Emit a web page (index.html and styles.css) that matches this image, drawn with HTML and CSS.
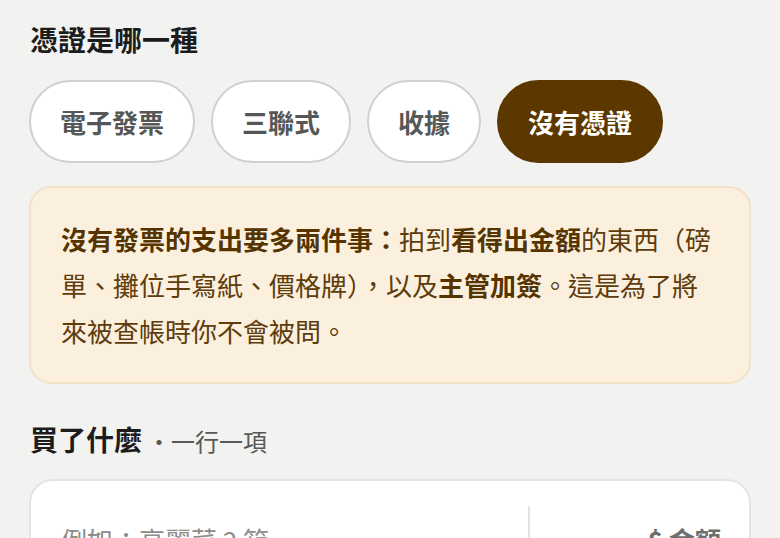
FILE: index.html
```html
<!DOCTYPE html>
<html lang="zh-Hant">
<head>
<meta charset="utf-8">
<link rel="stylesheet" href="styles.css">
</head>
<body>
<main class="page">
  <section class="section">
    <h2 class="label">憑證是哪一種</h2>
    <div class="pills">
      <button class="pill">電子發票</button>
      <button class="pill">三聯式</button>
      <button class="pill">收據</button>
      <button class="pill pill-active">沒有憑證</button>
    </div>
    <div class="notice">
      <b>沒有發票的支出要多兩件事：</b>拍到<b>看得出金額</b>的東西（磅單、攤位手寫紙、價格牌），以及<b>主管加簽</b>。這是為了將來被查帳時你不會被問。
    </div>
  </section>
  <section class="section items">
    <h2 class="label">買了什麼<span class="hint"><span class="dot">·</span>一行一項</span></h2>
    <div class="card">
      <div class="row">
        <div class="cell-name">例如：高麗菜 2 箱</div>
        <div class="cell-amount">$ 金額</div>
      </div>
    </div>
  </section>
</main>
</body>
</html>
```

FILE: styles.css
```css
* { box-sizing: border-box; }
html, body {
  margin: 0;
  padding: 0;
  background: #f2f2f0;
}
body {
  font-family: "Noto Sans CJK TC", "Noto Sans", sans-serif;
  color: #1c1c1c;
  overflow: hidden;
  height: 538px;
}
.page {
  padding: 20px 29px 0 30px;
}
.label {
  margin: 0;
  font-size: 28px;
  font-weight: 700;
  line-height: 38px;
  color: #1c1c1c;
}
.pills {
  display: flex;
  gap: 16px;
  margin-top: 22px;
  margin-left: -1px;
}
.pill {
  font-family: inherit;
  height: 83px;
  padding: 0 29px;
  border: 2px solid #cfd0cf;
  border-radius: 42px;
  background: #ffffff;
  color: #555856;
  font-size: 26px;
  font-weight: 700;
  line-height: 1;
}
.pill-active {
  background: #5c3800;
  border-color: #5c3800;
  color: #ffffff;
}
.notice {
  margin-top: 23px;
  margin-left: -1px;
  padding: 28px 30px;
  background: #fbf0de;
  border: 2px solid #f1e2c8;
  border-radius: 22px;
  font-size: 26px;
  line-height: 46px;
  color: #5e3c0c;
}
.notice b {
  font-weight: 700;
  color: #553400;
}
.items {
  margin-top: 36px;
}
.hint {
  font-size: 24px;
  font-weight: 400;
  color: #555856;
}
.dot {
  display: inline-block;
  margin: 0 0 0 5px;
}
.card {
  margin-top: 19px;
  margin-left: -1px;
  background: #ffffff;
  border: 2px solid #e4e4e2;
  border-radius: 24px;
  padding: 25px 30px;
}
.row {
  display: grid;
  grid-template-columns: 1fr 191px;
  font-size: 26px;
  line-height: 60px;
}
.cell-name {
  color: #8c8c8c;
  padding-top: 4px;
}
.cell-amount {
  border-left: 2px solid #e2e2e2;
  text-align: right;
  color: #6e6e6e;
  font-weight: 700;
  padding-top: 4px;
  padding-right: 0;
  margin-right: -2px;
}
```
